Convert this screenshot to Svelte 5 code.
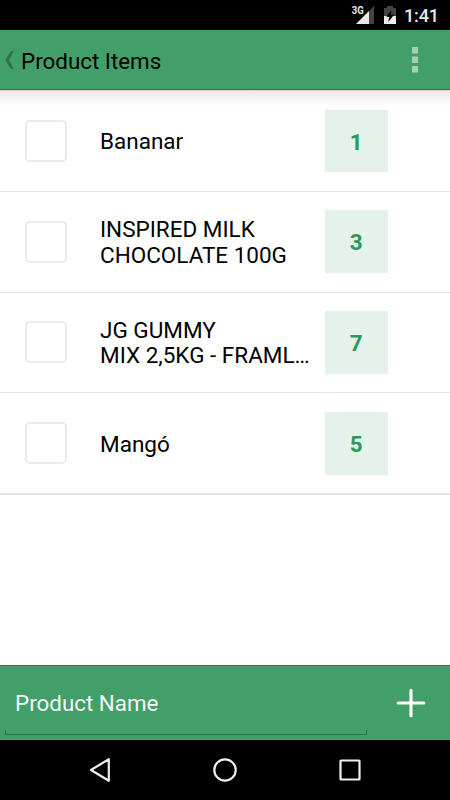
<script>
  let items = $state([
    { name: 'Bananar', count: 1, done: false },
    { name: 'INSPIRED MILK CHOCOLATE 100G', count: 3, done: false },
    { name: 'JG GUMMY\nMIX 2,5KG - FRAML…', count: 7, done: false },
    { name: 'Mangó', count: 5, done: false }
  ]);
  let productName = $state('');

  function addItem() {
    const name = productName.trim();
    if (!name) return;
    items.push({ name, count: 1, done: false });
    productName = '';
  }
</script>

<div class="screen">
  <div class="status-bar">
    <svg class="signal" viewBox="0 0 24 20" width="24" height="20" aria-hidden="true">
      <path d="M22 2V20H4Z" fill="#444" />
      <path d="M17 7V20H4Z" fill="#e8e8e8" />
      <text x="-0.3" y="9.6" textLength="12" lengthAdjust="spacingAndGlyphs">3G</text>
    </svg>
    <svg class="battery" viewBox="0 0 12 18" width="12" height="18" aria-hidden="true">
      <path d="M0 2H3V0H9V2H12V18H0Z" fill="#444" />
      <path d="M0 10H12V18H0Z" fill="#eee" />
      <path d="M7.5 4L2.3 11H5.3L4.3 16L10 8.7H6.7Z" fill="#000" />
    </svg>
    <span class="clock">1:41</span>
  </div>

  <header>
    <button type="button" class="back" aria-label="Back">
      <svg viewBox="0 0 9 18" width="9" height="18">
        <path d="M5.8 0H9L4.1 9L9 18H5.8L.3 9Z" fill="#31744c" />
      </svg>
    </button>
    <h1>Product Items</h1>
    <button type="button" class="more" aria-label="More options">
      <svg viewBox="0 0 6 26" width="6" height="26">
        <path d="M0 0H6V6.5H0ZM0 9.5H6V16H0ZM0 19H6V25.5H0Z" fill="#a5d0b6" />
      </svg>
    </button>
  </header>

  <ul>
    {#each items as item}
      <li>
        <input type="checkbox" bind:checked={item.done} aria-label={item.name} />
        <span class="name">{item.name}</span>
        <span class="count">{item.count}</span>
      </li>
    {/each}
  </ul>

  <footer>
    <div class="field">
      <input type="text" placeholder="Product Name" bind:value={productName} />
    </div>
    <button type="button" class="add" aria-label="Add product" onclick={addItem}>
      <svg viewBox="0 0 30 30" width="30" height="30">
        <path d="M15 2.2V27.8M2.2 15H27.8" stroke="#fff" stroke-width="3.1" stroke-linecap="round" />
      </svg>
    </button>
  </footer>

  <nav>
    <svg viewBox="0 0 26 26" width="26" height="26" aria-label="Back">
      <path d="M21.8 2.2V23.8L4 13Z" />
    </svg>
    <svg viewBox="0 0 26 26" width="26" height="26" aria-label="Home">
      <circle cx="13" cy="13" r="10.7" />
    </svg>
    <svg viewBox="0 0 26 26" width="26" height="26" aria-label="Recent apps">
      <rect x="3.5" y="3.5" width="19" height="19" rx="0.6" />
    </svg>
  </nav>
</div>

<style>
  :global(body) {
    margin: 0;
  }

  .screen {
    background: #fff;
    color: #000;
    display: flex;
    flex-direction: column;
    font-family: Roboto, sans-serif;
    font-size: 22.4px;
    height: 800px;
    overflow: hidden;
    width: 450px;
  }

  .screen * {
    box-sizing: border-box;
  }

  button {
    background: none;
    border: 0;
    display: flex;
    padding: 0;
  }

  .status-bar {
    background: #000;
    color: #e8e8e8;
    display: flex;
    flex: none;
    height: 30px;
    justify-content: flex-end;
    padding: 4px 11px 0 0;
  }

  .signal {
    margin-right: 8px;
    overflow: visible;
  }

  .signal text {
    fill: #e8e8e8;
    font-size: 10px;
    font-weight: 700;
  }

  .battery {
    margin: 2px 8px 0 0;
  }

  .clock {
    font-size: 18.2px;
    font-weight: 500;
    letter-spacing: -0.2px;
    line-height: 24px;
  }

  header {
    align-items: center;
    background: #429f69;
    border-bottom: 1px solid #168449;
    display: flex;
    flex: none;
    height: 60px;
    padding-left: 5px;
  }

  h1 {
    flex: 1;
    font-size: 22.4px;
    font-weight: 400;
    margin: 3px 0 0 7px;
  }

  .more {
    margin-right: 32px;
  }

  ul {
    background: linear-gradient(#d0d0d0, #e9e9e9 1.5px, #f3f3f3 7px, #fff 16px);
    flex: 1;
    list-style: none;
    margin: 0;
    padding: 1px 0 0;
  }

  li {
    align-items: center;
    border-bottom: 1px solid #e4e4e4;
    display: flex;
    height: 100.8px;
    padding-left: 25px;
  }

  li:last-child {
    border-bottom: 2px solid #e2e2e2;
    height: 102px;
  }

  li input {
    appearance: none;
    background: #fff;
    border: 2px solid #ebebeb;
    border-radius: 5px;
    height: 42px;
    margin: 0;
    width: 42px;
  }

  li input:checked {
    background: #429f69;
  }

  .name {
    font-size: 22.5px;
    line-height: 25.6px;
    margin: 2px 0 0 33px;
    overflow: hidden;
    white-space: pre-line;
    width: 213px;
  }

  .count {
    background: #e5f2e9;
    color: #2b9959;
    font-weight: 700;
    height: 62.5px;
    line-height: 64px;
    margin-left: 12px;
    text-align: center;
    width: 62.5px;
  }

  footer {
    align-items: center;
    background: #429f69;
    border-top: 1px solid #128a48;
    display: flex;
    flex: none;
    height: 75px;
  }

  .field {
    align-self: flex-end;
    background:
      linear-gradient(#2e7549, #2e7549) left bottom / 1px 5px no-repeat,
      linear-gradient(#2e7549, #2e7549) right bottom / 1px 5px no-repeat,
      linear-gradient(#2e7549, #2e7549) left bottom / 100% 1px no-repeat;
    height: 68px;
    margin: 0 0 5px 5px;
    width: 362px;
  }

  .field input {
    background: none;
    border: 0;
    color: #fff;
    font: inherit;
    height: 64px;
    outline: 0;
    padding: 8px 10px 0;
    width: 100%;
  }

  .field input::placeholder {
    color: #f1f8f4;
    opacity: 1;
  }

  .add {
    margin-left: 29px;
  }

  nav {
    align-items: center;
    background: #000;
    display: flex;
    flex: none;
    gap: 99px;
    height: 60px;
    justify-content: center;
  }

  nav svg {
    fill: none;
    stroke: #eee;
    stroke-linejoin: round;
    stroke-width: 2.2;
  }
</style>
